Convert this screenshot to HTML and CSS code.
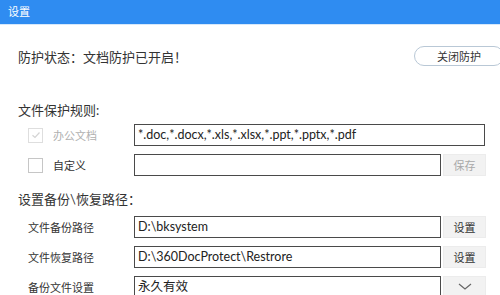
FILE: index.html
```html
<!DOCTYPE html>
<html lang="zh-CN">
<head>
    <meta charset="UTF-8">
    <title>设置</title>
    <link rel="stylesheet" href="styles.css">
</head>
<body>
    <div class="titlebar">设置</div>

    <div class="status-row">
        <span class="status-text">防护状态：文档防护已开启！</span>
        <button class="pill-btn">关闭防护</button>
    </div>

    <div class="section-title first">文件保护规则:</div>

    <div class="row">
        <label class="check-label disabled">
            <span class="checkbox checked">
                <svg width="10" height="10" viewBox="0 0 10 10"><path d="M1.5 5.2 L4 7.5 L8.5 2.5" fill="none" stroke="#d4d4d4" stroke-width="1.2"/></svg>
            </span>
            办公文档
        </label>
        <div class="field wide">*.doc,*.docx,*.xls,*.xlsx,*.ppt,*.pptx,*.pdf</div>
    </div>

    <div class="row">
        <label class="check-label">
            <span class="checkbox"></span>
            自定义
        </label>
        <div class="field"></div>
        <button class="side-btn disabled">保存</button>
    </div>

    <div class="section-title second">设置备份\恢复路径：</div>

    <div class="row path-row">
        <span class="path-label">文件备份路径</span>
        <div class="field">D:\bksystem</div>
        <button class="side-btn">设置</button>
    </div>

    <div class="row path-row">
        <span class="path-label">文件恢复路径</span>
        <div class="field">D:\360DocProtect\Restrore</div>
        <button class="side-btn">设置</button>
    </div>

    <div class="row path-row">
        <span class="path-label">备份文件设置</span>
        <div class="field">永久有效</div>
        <button class="side-btn">
            <svg width="14" height="8" viewBox="0 0 14 8"><path d="M1 1 L7 6 L13 1" fill="none" stroke="#666" stroke-width="1.2"/></svg>
        </button>
    </div>
</body>
</html>
```

FILE: styles.css
```css
body {
    margin: 0;
    padding: 0;
    background-color: #ffffff;
    color: #333;
    font-family: "Lato", "Noto Sans CJK SC", sans-serif;
    overflow: hidden;
}

.titlebar {
    height: 24px;
    line-height: 23px;
    padding-left: 8px;
    background-color: #2f8cf1;
    color: #fff;
    font-size: 11px;
    border-bottom: 1px solid #d6e8fb;
}

.status-row {
    display: flex;
    justify-content: space-between;
    align-items: center;
    margin-top: 21px;
    padding-left: 18px;
    height: 20px;
}

.status-text {
    font-family: "Noto Sans CJK SC", sans-serif;
    font-size: 13px;
}

.pill-btn {
    width: 90px;
    height: 20px;
    margin-right: -4px;
    padding: 0 0 0 22px;
    text-align: left;
    border: 1px solid #b9c8d6;
    border-radius: 10px;
    background-color: #fff;
    color: #333;
    font-family: inherit;
    font-size: 11px;
}

.section-title {
    padding-left: 18px;
    font-size: 13px;
    line-height: 18px;
}

.section-title.first {
    margin-top: 35px;
    margin-bottom: 5px;
}

.section-title.second {
    margin-top: 14px;
    margin-bottom: 8px;
}

.row {
    display: flex;
    align-items: center;
    height: 22px;
    margin-bottom: 8px;
    padding-left: 28px;
}

.check-label {
    display: flex;
    align-items: center;
    width: 106px;
    font-size: 11px;
    color: #333;
}

.check-label.disabled {
    color: #b0b0b0;
}

.checkbox {
    display: flex;
    align-items: center;
    justify-content: center;
    width: 13px;
    height: 13px;
    margin-right: 10px;
    border: 1px solid #c6c6c6;
    background-color: #fff;
}

.checkbox.checked {
    border-color: #dedede;
}

.field {
    box-sizing: border-box;
    width: 307px;
    height: 22px;
    padding-left: 3px;
    border: 1px solid #4a4a4a;
    background-color: #fff;
    font-size: 12.5px;
    line-height: 20px;
    color: #222;
    white-space: nowrap;
    overflow: hidden;
}

.field.wide {
    width: 351px;
}

.side-btn {
    display: flex;
    align-items: center;
    justify-content: center;
    width: 43px;
    height: 22px;
    margin-left: 2px;
    padding: 0;
    border: 1px solid #ececec;
    background-color: #f2f2f2;
    color: #333;
    font-family: inherit;
    font-size: 11px;
}

.side-btn.disabled {
    color: #a8a8a8;
}

.path-label {
    width: 106px;
    font-size: 11px;
}
```
